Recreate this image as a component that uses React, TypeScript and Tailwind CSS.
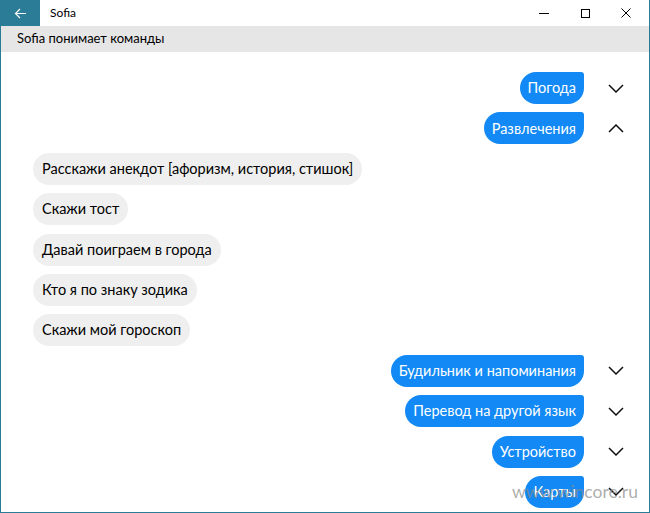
import React from "react";

const font = { fontFamily: "'Segoe UI', Lato, 'Noto Sans', sans-serif" };

type Row =
  | { kind: "topic"; text: string; open?: boolean }
  | { kind: "phrase"; text: string };

const rows: Row[] = [
  { kind: "topic", text: "Погода" },
  { kind: "topic", text: "Развлечения", open: true },
  { kind: "phrase", text: "Расскажи анекдот [афоризм, история, стишок]" },
  { kind: "phrase", text: "Скажи тост" },
  { kind: "phrase", text: "Давай поиграем в города" },
  { kind: "phrase", text: "Кто я по знаку зодика" },
  { kind: "phrase", text: "Скажи мой гороскоп" },
  { kind: "topic", text: "Будильник и напоминания" },
  { kind: "topic", text: "Перевод на другой язык" },
  { kind: "topic", text: "Устройство" },
  { kind: "topic", text: "Карты" },
];

function Chevron({ up }: { up?: boolean }) {
  return (
    <svg width="16" height="9" viewBox="0 0 16 9" className="shrink-0">
      <polyline
        points={up ? "1,8 8,1 15,8" : "1,1 8,8 15,1"}
        fill="none"
        stroke="#111"
        strokeWidth="1.5"
      />
    </svg>
  );
}

export default function App() {
  return (
    <div
      className="relative w-[650px] h-[513px] overflow-hidden bg-white border-x border-b border-[#2b7c96] flex flex-col text-black"
      style={font}
    >
      {/* Title bar */}
      <div className="h-[26px] flex items-center shrink-0">
        <div className="w-[40px] h-full bg-[#2b7c96] flex items-center justify-center -ml-px">
          <svg width="13" height="11" viewBox="0 0 13 11">
            <path d="M12 5.5H1.5M6 1 1.5 5.5 6 10" fill="none" stroke="#fff" strokeWidth="1.2" />
          </svg>
        </div>
        <span className="ml-[10px] text-[12px]">Sofia</span>
        <div className="ml-auto flex items-center h-full">
          <div className="w-[46px] h-full flex items-center justify-center">
            <div className="w-[10px] h-px bg-black" />
          </div>
          <div className="w-[36px] h-full flex items-center justify-center">
            <div className="w-[9px] h-[9px] border border-black" />
          </div>
          <div className="w-[46px] h-full flex items-center justify-center">
            <svg width="10" height="10" viewBox="0 0 10 10">
              <path d="M0.5 0.5 9.5 9.5M9.5 0.5 0.5 9.5" stroke="#000" strokeWidth="1" />
            </svg>
          </div>
        </div>
      </div>

      {/* Header */}
      <div className="h-[26px] bg-[#e6e6e6] flex items-center pl-[16px] text-[13px] shrink-0">
        Sofia понимает команды
      </div>

      {/* Commands list */}
      <div className="flex flex-col gap-[8.4px] pt-[20px] pl-[32px] pr-[25px]">
        {rows.map((r, i) =>
          r.kind === "topic" ? (
            <div key={i} className="h-[32px] flex items-center justify-end shrink-0">
              <div className="h-full flex items-center px-[8px] bg-[#1289f5] text-white text-[14.5px] rounded-[16px] rounded-tr-[3px]">
                {r.text}
              </div>
              <div className="ml-[24px]">
                <Chevron up={r.open} />
              </div>
            </div>
          ) : (
            <div key={i} className="h-[32px] flex items-center shrink-0">
              <div className="h-full flex items-center px-[9px] bg-[#efefef] text-[14.5px] rounded-[16px]">
                {r.text}
              </div>
            </div>
          )
        )}
      </div>

      {/* Watermark */}
      <div className="absolute right-[11px] bottom-[7px] text-[17.5px] text-[#8a8a8a]/70 pointer-events-none">
        www.wincore.ru
      </div>
    </div>
  );
}
